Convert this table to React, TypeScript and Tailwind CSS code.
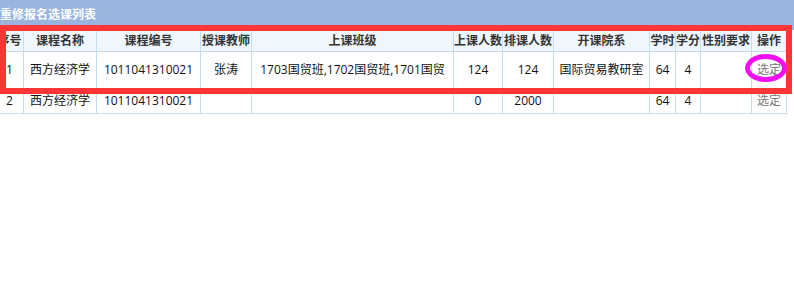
import React from "react";

type Course = {
  no: string;
  name: string;
  code: string;
  teacher: string;
  classes: string;
  enrolled: string;
  planned: string;
  dept: string;
  hours: string;
  credit: string;
  gender: string;
};

const COLS: { label: string; width: number }[] = [
  { label: "序号", width: 28 },
  { label: "课程名称", width: 73 },
  { label: "课程编号", width: 104 },
  { label: "授课教师", width: 51 },
  { label: "上课班级", width: 202 },
  { label: "上课人数", width: 49 },
  { label: "排课人数", width: 51 },
  { label: "开课院系", width: 96 },
  { label: "学时", width: 26 },
  { label: "学分", width: 25 },
  { label: "性别要求", width: 51 },
  { label: "操作", width: 35 },
];

const ROWS: (Course & { h: string })[] = [
  {
    no: "1",
    name: "西方经济学",
    code: "1011041310021",
    teacher: "张涛",
    classes: "1703国贸班,1702国贸班,1701国贸",
    enrolled: "124",
    planned: "124",
    dept: "国际贸易教研室",
    hours: "64",
    credit: "4",
    gender: "",
    h: "h-[37px]",
  },
  {
    no: "2",
    name: "西方经济学",
    code: "1011041310021",
    teacher: "",
    classes: "",
    enrolled: "0",
    planned: "2000",
    dept: "",
    hours: "64",
    credit: "4",
    gender: "",
    h: "h-[25px]",
  },
];

const cell =
  "border border-[#c6dcf1] px-0 text-center align-middle whitespace-nowrap overflow-hidden";

export default function App() {
  return (
    <div
      className="relative h-[302px] w-[794px] overflow-hidden bg-white text-[12px]"
      style={{ fontFamily: '"Open Sans", "Noto Sans CJK SC", sans-serif' }}
    >
      {/* panel title */}
      <div className="flex h-[30px] items-center bg-[#98b4df] pl-0 text-[12px] font-bold text-white">
        重修报名选课列表
      </div>

      {/* grid is scrolled a few pixels to the left, so the first column is clipped */}
      <table className="ml-[-5px] table-fixed border-collapse">
        <colgroup>
          {COLS.map((c) => (
            <col key={c.label} style={{ width: c.width }} />
          ))}
        </colgroup>
        <thead>
          <tr className="h-[21px] bg-[#eff6fe]">
            {COLS.map((c) => (
              <th key={c.label} className={`${cell} font-bold text-[#333]`}>
                {c.label}
              </th>
            ))}
          </tr>
        </thead>
        <tbody className="text-[#111]">
          {ROWS.map((r) => (
            <tr key={r.no} className={r.h}>
              <td className={cell}>{r.no}</td>
              <td className={cell}>{r.name}</td>
              <td className={cell}>{r.code}</td>
              <td className={cell}>{r.teacher}</td>
              <td className={cell}>{r.classes}</td>
              <td className={cell}>{r.enrolled}</td>
              <td className={cell}>{r.planned}</td>
              <td className={cell}>{r.dept}</td>
              <td className={cell}>{r.hours}</td>
              <td className={cell}>{r.credit}</td>
              <td className={cell}>{r.gender}</td>
              <td className={`${cell} text-[#777]`}>选定</td>
            </tr>
          ))}
        </tbody>
      </table>

      {/* highlight frame around the first row */}
      <div className="pointer-events-none absolute left-0 top-[25px] h-[69px] w-[792px] border-[6px] border-[#fe3535]" />
      {/* ring around the select link */}
      <div className="pointer-events-none absolute left-[745px] top-[54px] h-[28px] w-[42px] rounded-[50%] border-[5px] border-[#f010f0]" />
    </div>
  );
}
